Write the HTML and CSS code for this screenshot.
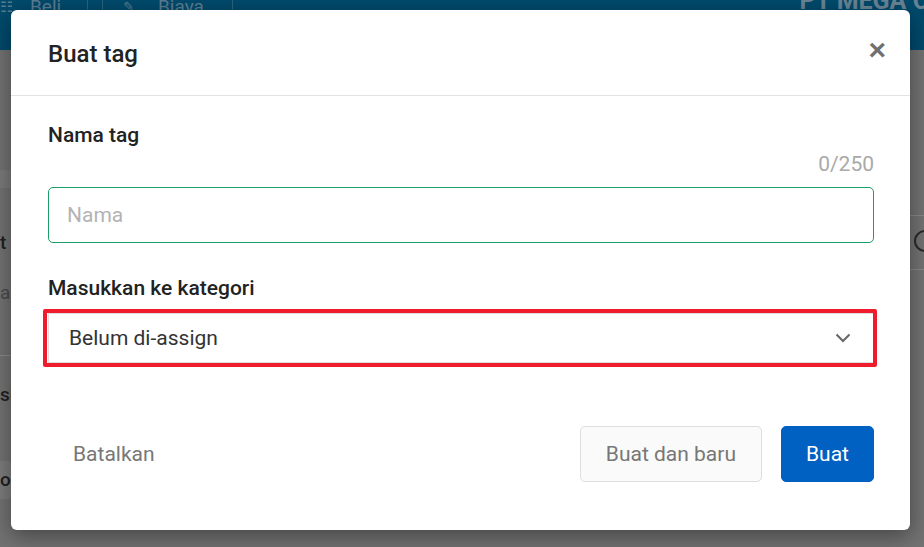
FILE: index.html
```html
<!DOCTYPE html>
<html lang="id">
<head>
    <meta charset="UTF-8">
    <meta name="viewport" content="width=device-width, initial-scale=1.0">
    <title>Buat tag</title>
    <link rel="stylesheet" href="styles.css">
</head>
<body>
    <div class="page">
        <div class="topbar">
            <span class="nav-icon">&#9783;</span>
            <span class="nav-item beli">Beli</span>
            <span class="nav-sep"></span>
            <span class="nav-icon small">&#9998;</span>
            <span class="nav-item biaya">Biaya</span>
            <span class="company">PT MEGA C</span>
        </div>
        <div class="page-body">
            <div class="side">
                <div class="side-band"></div>
                <div class="side-row dark">t</div>
                <div class="side-row">a</div>
                <div class="side-line"></div>
                <div class="side-row dark">si</div>
                <div class="side-row band dark">or</div>
            </div>
            <div class="main">
                <div class="main-line"></div>
                <div class="main-circle"></div>
                <div class="main-line"></div>
            </div>
        </div>
    </div>

    <div class="overlay">
        <div class="modal">
            <div class="modal-header">
                <h2>Buat tag</h2>
                <button class="close" type="button">&times;</button>
            </div>
            <div class="modal-body">
                <label class="field-label" for="nama">Nama tag</label>
                <div class="counter">0/250</div>
                <input class="text-input" id="nama" type="text" placeholder="Nama">

                <label class="field-label kategori-label">Masukkan ke kategori</label>
                <div class="highlight">
                    <div class="select">
                        <span>Belum di-assign</span>
                        <svg width="18" height="18" viewBox="0 0 18 18">
                            <path d="M2.5 5.5 L9 12 L15.5 5.5" fill="none" stroke="#666" stroke-width="2"/>
                        </svg>
                    </div>
                </div>
            </div>
            <div class="modal-footer">
                <button class="btn btn-link" type="button">Batalkan</button>
                <div class="actions">
                    <button class="btn btn-light" type="button">Buat dan baru</button>
                    <button class="btn btn-primary" type="button">Buat</button>
                </div>
            </div>
        </div>
    </div>
</body>
</html>
```

FILE: styles.css
```css
body {
    margin: 0;
    font-family: Roboto, "Liberation Sans", sans-serif;
    color: #222;
    background: #6f6f6f;
    overflow: hidden;
}
.page {
    height: 547px;
    display: flex;
    flex-direction: column;
}
.topbar {
    height: 50px;
    background: #014a6c;
    display: flex;
    align-items: flex-start;
    color: #5b7d91;
    font-size: 19px;
    line-height: 14px;
}
.nav-icon {
    width: 12px;
    font-size: 15px;
    line-height: 20px;
    margin-top: -3px;
    overflow: hidden;
}
.nav-icon.small {
    width: 10px;
    margin-left: 20px;
    font-size: 13px;
}
.nav-item {
    height: 14px;
    border-right: 1px solid #2c6381;
}
.beli {
    margin-left: 18px;
    width: 57px;
}
.biaya {
    margin-left: 25px;
    width: 74px;
}
.nav-sep {
    width: 14px;
    height: 14px;
    border-right: 1px solid #2c6381;
}
.company {
    margin-left: auto;
    font-weight: 700;
    line-height: 0;
    padding-top: 1px;
    font-size: 25px;
    color: #6a8494;
    white-space: nowrap;
    margin-right: -5px;
}
.page-body {
    flex: 1;
    display: flex;
    justify-content: space-between;
    background: #727272;
}
.side {
    width: 40px;
    padding-top: 120px;
    color: #3a3a3a;
    font-size: 19px;
    display: flex;
    flex-direction: column;
}
.side-band {
    height: 18px;
    background: #7a7a7a;
    margin-bottom: 30px;
}
.side-row {
    height: 50px;
    line-height: 50px;
    color: #4a4a4a;
}
.side-row.dark {
    color: #1f1f1f;
    font-weight: 500;
}
.side-line {
    height: 1px;
    background: #8a8a8a;
    margin: 37px 0 14px;
}
.side-row.band {
    margin-top: 41px;
    background: #7c7c7c;
    height: 38px;
    line-height: 38px;
}
.main {
    width: 14px;
    padding-top: 165px;
    display: flex;
    flex-direction: column;
}
.main-line {
    height: 1px;
    background: #888;
}
.main-circle {
    width: 18px;
    height: 18px;
    margin: 14px 0 17px 4px;
    border: 2px solid #2a2a2a;
    border-radius: 50%;
}
.overlay {
    position: absolute;
    inset: 0;
    padding: 10px 14px 17px 11px;
}
.modal {
    background: #fff;
    border-radius: 6px;
    height: 520px;
    box-shadow: 0 6px 22px rgba(0, 0, 0, 0.4);
    display: flex;
    flex-direction: column;
}
.modal-header {
    height: 85px;
    border-bottom: 1px solid #e3e3e3;
    display: flex;
    align-items: center;
    padding: 0 24px 0 37px;
}
.modal-header h2 {
    margin: 0;
    font-size: 24px;
    font-weight: 500;
    color: #222;
    flex: 1;
    padding-top: 2px;
}
.close {
    border: 0;
    background: none;
    font-size: 30px;
    font-weight: 700;
    color: #707070;
    padding: 0;
    line-height: 1;
    margin-top: -6px;
}
.modal-body {
    padding: 27px 36px 0 37px;
    display: flex;
    flex-direction: column;
    font-size: 21px;
    line-height: 25px;
}
.field-label {
    font-weight: 500;
    color: #222;
}
.counter {
    text-align: right;
    color: #a9a9a9;
    margin-top: 4px;
    margin-bottom: 10px;
}
.text-input {
    height: 56px;
    box-sizing: border-box;
    border: 1px solid #1a9e66;
    border-radius: 5px;
    padding: 0 18px;
    font-family: inherit;
    font-size: 21px;
    outline: none;
}
.text-input::placeholder {
    color: #b3b3b3;
}
.kategori-label {
    margin-top: 33px;
}
.highlight {
    position: relative;
    margin-top: 12px;
}
.highlight::after {
    content: "";
    position: absolute;
    left: -5px;
    right: -3px;
    top: -4px;
    bottom: -4px;
    border: 4px solid #ee1c2c;
    border-radius: 2px;
}
.select {
    height: 50px;
    box-sizing: border-box;
    border: 1px solid #ddd;
    display: flex;
    align-items: center;
    justify-content: space-between;
    padding: 0 21px 0 20px;
    font-size: 21px;
    color: #333;
}
.modal-footer {
    margin-top: auto;
    padding: 0 36px 48px 37px;
    display: flex;
    align-items: center;
    justify-content: space-between;
}
.actions {
    display: flex;
    gap: 19px;
}
.btn {
    font-family: inherit;
    font-size: 21px;
    height: 56px;
    border-radius: 5px;
    padding: 0 25px;
    cursor: pointer;
}
.btn-link {
    border: 0;
    background: none;
    color: #777;
    padding: 0 25px;
}
.btn-light {
    background: #fafafa;
    border: 1px solid #dedede;
    color: #777;
}
.btn-primary {
    background: #0061c2;
    border: 1px solid #0061c2;
    color: #fff;
    width: 93px;
    padding: 0;
}
```
